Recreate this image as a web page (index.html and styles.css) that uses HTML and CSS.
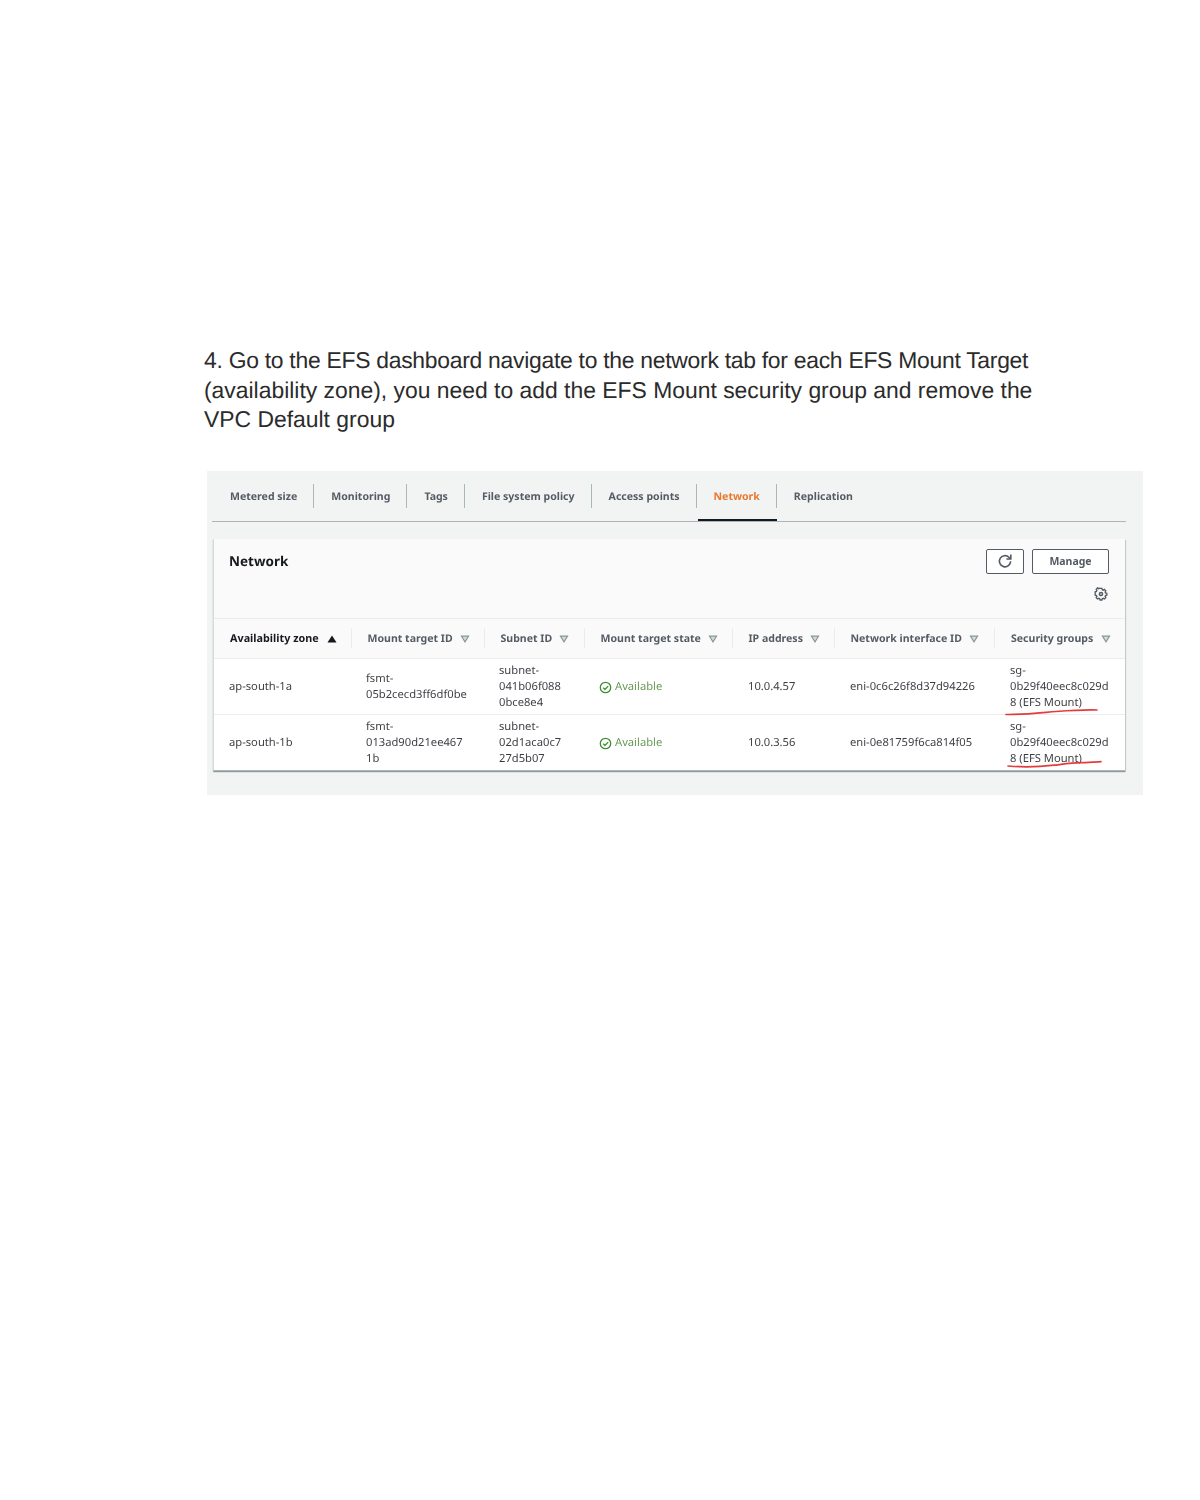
FILE: index.html
```html
<!DOCTYPE html>
<html lang="en">
<head>
  <meta charset="UTF-8">
  <title>EFS Mount Target Steps</title>
  <link rel="stylesheet" href="styles.css">
</head>
<body>

  <p class="step"><span class="step-tight">4. Go to the EFS dashboard navigate to the network tab for each EFS Mount Target</span> (availability zone), you need to add the EFS Mount security group and remove the VPC Default group</p>

  <div class="shot">
    <div class="tabs">
      <span class="tab">Metered size</span>
      <span class="tab">Monitoring</span>
      <span class="tab">Tags</span>
      <span class="tab">File system policy</span>
      <span class="tab">Access points</span>
      <span class="tab tab-active">Network</span>
      <span class="tab tab-last">Replication</span>
    </div>

    <div class="card">
      <div class="card-head">
        <h2 class="card-title">Network</h2>
        <div class="card-actions">
          <div class="buttons">
            <button class="btn btn-icon" type="button">
              <svg class="icon-refresh" viewBox="0 0 16 16"><path d="M13.600 8.200a5.600 5.600 0 1 1-1.700-4L13.600 6" /><path d="M13.800 1.600V6H9.400" /></svg>
            </button>
            <button class="btn" type="button">Manage</button>
          </div>
          <svg class="icon-gear" viewBox="0 0 16 16"><circle cx="8" cy="8" r="1.800" /><path d="M6.800 1.800h2.400l.4 1.700 1.300.6 1.500-.9 1.700 1.700-.9 1.500.5 1.300 1.700.4v2.400l-1.700.4-.5 1.200.9 1.500-1.700 1.700-1.500-.9-1.300.5-.4 1.700H6.800l-.4-1.700-1.300-.5-1.500.9-1.700-1.700.9-1.500-.5-1.200-1.700-.4V6.200l1.700-.4.5-1.300-.9-1.500 1.700-1.700 1.500.9 1.300-.6z" transform="translate(.8 -.1) scale(.9)" /></svg>
        </div>
      </div>

      <div class="row row-head">
        <div class="th th-sorted">Availability zone <svg class="sort" viewBox="0 0 10 8"><path d="M5 .5l4.500 7H.5z" /></svg></div>
        <div class="th">Mount target ID <svg class="sort" viewBox="0 0 10 8"><path d="M1.500 1.200h7L5 6.800z" /></svg></div>
        <div class="th">Subnet ID <svg class="sort" viewBox="0 0 10 8"><path d="M1.500 1.200h7L5 6.800z" /></svg></div>
        <div class="th">Mount target state <svg class="sort" viewBox="0 0 10 8"><path d="M1.500 1.200h7L5 6.800z" /></svg></div>
        <div class="th">IP address <svg class="sort" viewBox="0 0 10 8"><path d="M1.500 1.200h7L5 6.800z" /></svg></div>
        <div class="th">Network interface ID <svg class="sort" viewBox="0 0 10 8"><path d="M1.500 1.200h7L5 6.800z" /></svg></div>
        <div class="th">Security groups <svg class="sort" viewBox="0 0 10 8"><path d="M1.500 1.200h7L5 6.800z" /></svg></div>
      </div>

      <div class="row">
        <div class="td">ap-south-1a</div>
        <div class="td">fsmt-<br>05b2cecd3ff6df0be</div>
        <div class="td">subnet-<br>041b06f088<br>0bce8e4</div>
        <div class="td td-state">
          <svg class="icon-ok" viewBox="0 0 14 14"><circle cx="7" cy="7" r="5.600" /><path d="M4.400 7.100l2 2 3.400-3.600" /></svg>
          Available
        </div>
        <div class="td">10.0.4.57</div>
        <div class="td">eni-0c6c26f8d37d94226</div>
        <div class="td td-groups">sg-<br>0b29f40eec8c029d<br>8 (EFS Mount)
          <svg class="scribble" viewBox="0 0 130 58"><path d="M12 55.500c16 .3 32-1.500 50-3 14-1 28-1.800 41-1.500" /></svg>
        </div>
      </div>

      <div class="row">
        <div class="td">ap-south-1b</div>
        <div class="td">fsmt-<br>013ad90d21ee467<br>1b</div>
        <div class="td">subnet-<br>02d1aca0c7<br>27d5b07</div>
        <div class="td td-state">
          <svg class="icon-ok" viewBox="0 0 14 14"><circle cx="7" cy="7" r="5.600" /><path d="M4.400 7.100l2 2 3.400-3.600" /></svg>
          Available
        </div>
        <div class="td">10.0.3.56</div>
        <div class="td">eni-0e81759f6ca814f05</div>
        <div class="td td-groups">sg-<br>0b29f40eec8c029d<br>8 (EFS Mount)
          <svg class="scribble" viewBox="0 0 130 58"><path d="M14 51c14 1.200 30 1 46-.8 10-1.200 18-2.500 28-2.500 6 0 12-.5 19-1" /></svg>
        </div>
      </div>
    </div>
  </div>

</body>
</html>
```

FILE: styles.css
```css
body {
  margin: 0;
  background-color: #fff;
  font-family: 'Liberation Sans', Arial, sans-serif;
}

.step {
  width: 850px;
  margin: 0;
  padding: 346px 0 0 204px;
  font-size: 22.9px;
  line-height: 29.7px;
  color: #2b2b2b;
  text-rendering: geometricPrecision;
}

.step-tight {
  letter-spacing: -0.27px;
}

/* Pasted console screenshot */
.shot {
  width: 914px;
  height: 324px;
  margin: 35.800px 0 0 207px;
  padding: 0 17px 0 5px;
  background-color: #f2f3f3;
  font-family: 'Noto Sans', 'Open Sans', sans-serif;
  font-size: 11.2px;
  color: #545b64;
  text-rendering: geometricPrecision;
  filter: blur(0.35px);
}

.tabs {
  display: flex;
  align-items: center;
  height: 50px;
  border-bottom: 1px solid #aab7b8;
  font-size: 10.55px;
}

.tab {
  display: flex;
  align-items: center;
  height: 24px;
  padding: 2px 16px 0 17px;
  box-sizing: border-box;
  border-right: 1px solid #aab7b8;
  font-weight: 700;
  position: relative;
}

.tab:first-child {
  padding-left: 18px;
}

.tab-last {
  border-right: none;
}

.tab-active {
  color: #e8792b;
}

.tab-active::after {
  content: '';
  position: absolute;
  left: 1px;
  right: -1px;
  bottom: -13px;
  height: 2px;
  background-color: #16191f;
}

.card {
  margin: 17px 1px 0 1px;
  background-color: #fff;
  border-left: 1px solid #d5dbdb;
  border-bottom: 1px solid #aab7b8;
  box-shadow: 0 1px 1px rgba(0, 28, 36, 0.3), 1px 1px 1px rgba(0, 28, 36, 0.15);
}

.card-head {
  display: flex;
  justify-content: space-between;
  height: 79px;
  padding: 0 16px 0 15px;
  background-color: #fafafa;
}

.card-title {
  margin: 12px 0 0;
  font-size: 13.5px;
  line-height: 20px;
  font-weight: 700;
  color: #16191f;
}

.card-actions {
  display: flex;
  flex-direction: column;
  align-items: flex-end;
  padding-top: 10px;
}

.buttons {
  display: flex;
  gap: 8px;
}

.btn {
  height: 25px;
  width: 77px;
  padding: 0;
  background-color: #fff;
  border: 1px solid #545b64;
  border-radius: 2px;
  font-family: inherit;
  font-size: 10.5px;
  font-weight: 700;
  color: #545b64;
}

.btn-icon {
  display: flex;
  align-items: center;
  justify-content: center;
  width: 38px;
}

.icon-refresh {
  width: 16px;
  height: 16px;
  fill: none;
  stroke: #545b64;
  stroke-width: 1.6;
}

.icon-gear {
  width: 14px;
  height: 14px;
  margin: 13px 1px 0 0;
  fill: none;
  stroke: #545b64;
  stroke-width: 1.7;
}

.row {
  display: grid;
  grid-template-columns: 137px 133px 100px 148px 102px 160px 130px;
  height: 56px;
  background-color: #fff;
  border-bottom: 1px solid #eaeded;
  box-sizing: border-box;
}

.row:last-child {
  height: 55px;
  border-bottom: none;
}

.row-head {
  height: 41px;
  align-items: center;
  background-color: #fafafa;
  border-top: 1px solid #eaeded;
  border-bottom: 1px solid #eaeded;
  font-size: 10.55px;
}

.th {
  display: flex;
  align-items: center;
  gap: 7px;
  height: 20px;
  padding: 1px 0 0 15.5px;
  box-sizing: border-box;
  border-left: 1px solid #eaeded;
  font-weight: 700;
  white-space: nowrap;
}

.th-sorted {
  gap: 8px;
  padding-left: 16px;
  border-left: none;
  color: #16191f;
  font-size: 10.8px;
}

.th:last-child {
  gap: 8px;
  padding-left: 16px;
}

.sort {
  width: 10px;
  height: 8px;
  fill: #d5dbdb;
  stroke: #879596;
  stroke-width: 1.2;
}

.th-sorted .sort {
  fill: #16191f;
  stroke: none;
}

.td {
  display: flex;
  flex-direction: column;
  justify-content: center;
  padding: 2px 0 0 15px;
  line-height: 16px;
  color: #16191f;
  opacity: 0.85;
  white-space: nowrap;
}

.td:nth-child(n+5) {
  padding-left: 16px;
}

.td-state {
  flex-direction: row;
  justify-content: flex-start;
  align-items: center;
  gap: 3px;
  color: #4c8a3a;
}

.icon-ok {
  width: 13px;
  height: 13px;
  fill: none;
  stroke: #1d7a0c;
  stroke-width: 1.4;
}

.td-groups {
  display: block;
  padding-top: 4px;
  position: relative;
}

.scribble {
  position: absolute;
  top: 0;
  left: 0;
  width: 130px;
  height: 58px;
  fill: none;
  stroke: #e01b1b;
  stroke-width: 1.7;
  stroke-linecap: round;
}
```
